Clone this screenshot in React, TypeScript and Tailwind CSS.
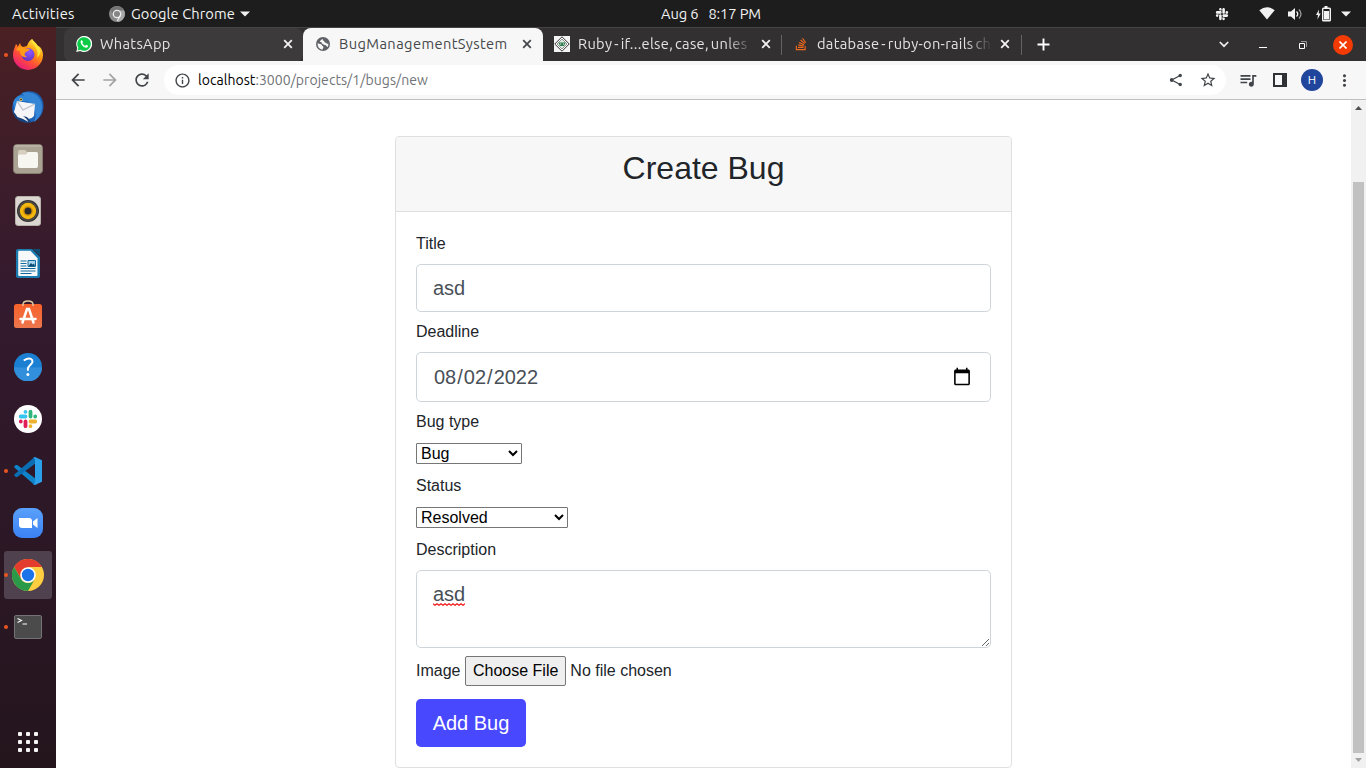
import type { ReactNode } from "react";
import {
  MdArrowBack, MdArrowForward, MdRefresh, MdInfoOutline, MdStarBorder, MdQueueMusic, MdMoreVert,
} from "react-icons/md";
import { FaStackOverflow, FaSlack } from "react-icons/fa";

function TopBar() {
  return (
    <header className="grid h-[27px] shrink-0 grid-cols-[1fr_auto_1fr] items-center bg-[#1d1d1d] text-[14.667px] text-[#f2f2f2]">
      <div className="flex items-center pl-3">
        <span className="w-[63px] whitespace-nowrap tracking-[0.25px]">Activities</span>
        <svg className="ml-[34px]" width="16" height="16" viewBox="0 0 16 16">
          <circle cx="8" cy="8" r="8" fill="#8b8b8b" />
          <path d="M8 4.3h6.9A8 8 0 0 1 8 16l3-5.500z" fill="#a8a8a8" />
          <path d="M8 4.3h6.9A8 8 0 0 0 1.4 3.500L4.800 9.400z" fill="#747474" />
          <circle cx="8" cy="8" r="3.700" fill="#858585" stroke="#eee" strokeWidth="1.300" />
          <path d="M11.300 9.500 8.300 14.800" stroke="#eee" strokeWidth="1.200" />
        </svg>
        <span className="ml-1.5 w-[105px] whitespace-nowrap tracking-[0.08px]">Google Chrome</span>
        <svg className="ml-1" width="10" height="6"><path d="M0 .5h10L5 5.500z" fill="#f2f2f2" /></svg>
      </div>
      <div className="flex gap-2.5 pl-[56px] whitespace-nowrap">
        <span className="tracking-[-0.1px]">Aug 6</span>
        <span className="tracking-[-0.1px]">8:17 PM</span>
      </div>
      <div className="flex items-center justify-end pr-[15px]">
        <FaSlack size={14} />
        <svg className="ml-[30px]" width="16" height="13" viewBox="0 0 16 13">
          <path d="M.3 3.200Q8-2.600 15.700 3.200L8 12.400z" fill="#f2f2f2" />
        </svg>
        <svg className="ml-[13px]" width="15" height="14" viewBox="0 0 15 14">
          <path d="M0 4.500h3L7 1v12L3 9.500H0z" fill="#f2f2f2" />
          <path d="M8.500 4.500q2.500 2.500 0 5" fill="none" stroke="#f2f2f2" strokeWidth="1.300" />
          <path d="M11 2.500q4 4.500 0 9" fill="none" stroke="#a0a0a0" strokeWidth="1.200" />
        </svg>
        <svg className="ml-[13px]" width="15" height="16" viewBox="0 0 15 16">
          <path d="M3 3.500 0 9h2l-.6 4.500L4.700 7.500H2.700z" fill="#f2f2f2" />
          <path d="M8.500 0h3v2h-3z" fill="#f2f2f2" />
          <rect x="6.700" y="2.200" width="7.600" height="12.600" rx=".8" fill="none" stroke="#f2f2f2" strokeWidth="1.400" />
          <path d="M8 5h5v8.500H8z" fill="#f2f2f2" />
        </svg>
        <svg className="ml-2.5" width="10" height="6"><path d="M0 .5h10L5 5.500z" fill="#f2f2f2" /></svg>
      </div>
    </header>
  );
}

function Firefox() {
  return (
    <svg width="32" height="32" viewBox="0 0 32 32">
      <defs>
        <linearGradient id="ffBody" x1=".85" y1=".05" x2=".2" y2="1">
          <stop offset="0" stopColor="#fff44f" /><stop offset=".35" stopColor="#ff980e" />
          <stop offset=".65" stopColor="#ff4a3d" /><stop offset="1" stopColor="#e31587" />
        </linearGradient>
        <radialGradient id="ffGlobe" cx=".6" cy=".3" r=".8">
          <stop offset="0" stopColor="#9059ff" /><stop offset="1" stopColor="#5b2fbd" />
        </radialGradient>
      </defs>
      <path d="M20 0c1 2 4 3.500 5.500 6.500C29 8 31 12 31 16A15 15 0 1 1 1 16C1 11 3 8 4 5c1 1 1.500 1.500 1.600 3L8 4c.5 2 1 3 3 4l4-1c1-3 2-5 5-7z" fill="url(#ffBody)" />
      <circle cx="16" cy="15.500" r="6.500" fill="url(#ffGlobe)" />
      <path d="M4 11c2-4 6-4 8-2l6 1c-1 2-4 2.500-5 4-1 2 0 3 2 4-4 1-7-2-7-6z" fill="#ff9b16" />
      <path d="M20 0c-1 4 2 5 4 9 2 3 2 7 1 10 5-5 4-9 .5-12.500C24 4 21 2 20 0z" fill="#ffe53a" />
    </svg>
  );
}
function Thunderbird() {
  return (
    <svg width="34" height="34" viewBox="0 0 34 34">
      <path d="M11 3C19-1 28 2 31 9c4 9 0 20-10 23-7 2-16-1-19-9C0 17 2 10 7 7z" fill="#1b62b5" />
      <path d="M11 3c10-3 19 3 20 12 1 7-3 14-8 17 3-7 2-12-4-18z" fill="#3585d6" />
      <path d="M2 13c2-7 7-9 12-7l8 6-12-1-6 8z" fill="#2f86d8" />
      <path d="m6 11 18 3-1 12q-3 4-8 2L3 22z" fill="#f6f6f8" />
      <path d="m6 11 6 9 12-6" fill="none" stroke="#b9bec8" strokeWidth="1.200" />
      <path d="M2 22c5 3 8 4 14 5l4 5C12 34 4 30 2 22z" fill="#174078" />
      <path d="m3 22 3.500-1 9 8 2 3q-4-3-11-5z" fill="#f6f6f8" />
      <circle cx="10" cy="9.500" r="1.500" fill="#f4c95d" /><circle cx="10" cy="9.500" r=".8" fill="#111" />
    </svg>
  );
}
function Files() {
  return (
    <svg width="30" height="30" viewBox="0 0 30 30">
      <rect x=".5" y=".5" width="29" height="29" rx="3.500" fill="#aaa394" stroke="#847e70" />
      <rect x="1.500" y="1.500" width="27" height="1" fill="#c8c1b3" />
      <path d="M5 8a2 2 0 0 1 2-2h5l2 2h9a2 2 0 0 1 2 2v4H5z" fill="#d6cfc0" />
      <path d="M5 12q0-1.500 1.500-1.500H13L15 8h8q2 0 2 2v12q0 2-2 2H7q-2 0-2-2z" fill="#f8f6f1" />
    </svg>
  );
}
function Rhythmbox() {
  return (
    <svg width="26" height="30" viewBox="0 0 26 30">
      <rect x=".5" y=".5" width="25" height="29" rx="2.500" fill="#dcd7d1" stroke="#b6b1ab" />
      <circle cx="13" cy="15" r="11" fill="#323232" />
      <circle cx="13" cy="15" r="9.300" fill="none" stroke="#59574f" />
      <circle cx="13" cy="15" r="8.200" fill="#f3b70f" />
      <circle cx="13" cy="15" r="5" fill="#d79605" />
      <circle cx="13" cy="15" r="3.500" fill="#292a2d" />
    </svg>
  );
}
function Writer() {
  return (
    <svg width="24" height="29" viewBox="0 0 24 29">
      <path d="M2 0h14l8 8v19a2 2 0 0 1-2 2H2a2 2 0 0 1-2-2V2a2 2 0 0 1 2-2z" fill="#197bb0" />
      <path d="M17 0h7v7z" fill="#0f4c72" />
      <path d="M3.200 1.800H14.500l7 7.500V26q0 1-1 1H3.200q-1 0-1-1V3q0-1.200 1-1.200z" fill="#f6f8f9" />
      <path d="M4.500 12h6M4.500 14.500h6M4.500 17h6M4.500 19.500h15M4.500 22h15M4.500 24.500h11" stroke="#126a9c" strokeWidth="1.200" />
      <path d="M12 11.500h7.500v6H12z" fill="#a9d4ed" stroke="#126a9c" />
      <path d="m12.500 17 2.500-3 1.500 1.500 1.500-1 1 2.500z" fill="#0f4c72" />
    </svg>
  );
}
function Software() {
  return (
    <svg width="30" height="30" viewBox="0 0 30 30">
      <defs><linearGradient id="bag" x1="0" y1="0" x2="0" y2="1"><stop stopColor="#f7612a" /><stop offset="1" stopColor="#ed764d" /></linearGradient></defs>
      <rect x="1" y="4" width="28" height="24" rx="2.500" fill="url(#bag)" />
      <path d="M10 6V4.500q0-3.500 5-3.500t5 3.500V6" fill="none" stroke="#ddc8a2" strokeWidth="1.500" />
      <path d="M9.500 22.500 14 9h2l4.500 13.500M7.500 19h15" fill="none" stroke="#fff" strokeWidth="2.500" strokeLinecap="round" />
    </svg>
  );
}
function Help() {
  return (
    <svg width="28" height="28" viewBox="0 0 28 28">
      <circle cx="14" cy="14" r="14" fill="#1c80d2" />
      <path d="M0 14.500h28a14 14 0 0 1-28 0z" fill="#318fdb" />
      <path d="M9.700 7.500q6-3.800 8.500-.4c2 4-4.300 4.700-4.300 8.900v1.700" fill="none" stroke="#fff" strokeWidth="1.900" />
      <circle cx="13.900" cy="21.600" r="1.500" fill="#fff" />
    </svg>
  );
}
function Slack() {
  return (
    <svg width="28" height="28" viewBox="0 0 28 28">
      <circle cx="14" cy="14" r="14" fill="#fff" />
      <g strokeWidth="3.800" strokeLinecap="round">
        <path d="M11.500 6.800h.01M6.700 11.500h4.800" stroke="#36c5f0" />
        <path d="M16.500 6.700v4.800M21.200 11.500h.01" stroke="#2eb67d" />
        <path d="M16.500 21.200h.01M16.500 16.500h4.700" stroke="#ecb22e" />
        <path d="M6.800 16.500h.01M11.500 16.500v4.700" stroke="#e01e5a" />
      </g>
    </svg>
  );
}
function Code() {
  return (
    <svg width="28" height="28" viewBox="0 0 28 28">
      <path d="m.3 9.300 1.500-1.400h1.500L21 21.300v6.200h-1L.3 10.500z" fill="#0f84cb" />
      <path d="m.3 18.700 1.500 1.400h1.500L21 6.700V.5h-1L.3 17.500z" fill="#0b6db3" />
      <path d="M21 0 28 3.300v21.400L21 28l-1.800-.7L21 26V2L19.200.7z" fill="#2b9fe9" />
    </svg>
  );
}
function Zoom() {
  return (
    <svg width="30" height="30" viewBox="0 0 30 30">
      <defs><linearGradient id="zoomBg" x1="0" y1="0" x2="0" y2="1"><stop stopColor="#5aa0fb" /><stop offset="1" stopColor="#3b82f3" /></linearGradient></defs>
      <rect width="30" height="30" rx="9" fill="url(#zoomBg)" />
      <path d="M6 10h10q3 0 3 3v7H9q-3 0-3-3z" fill="#fff" /><path d="m20 13.500 4.500-3.500v10L20 16.500z" fill="#fff" />
    </svg>
  );
}
function Chrome() {
  return (
    <svg width="32" height="32" viewBox="0 0 32 32">
      <circle cx="16" cy="16" r="16" fill="#ffcd40" />
      <path d="M16 8h13.860A16 16 0 0 0 2.140 8l6.930 12z" fill="#e33b2e" />
      <path d="M2.140 8 9.070 20A8 8 0 0 0 22.930 20L16 32A16 16 0 0 1 2.140 8z" fill="#2b9a48" />
      <circle cx="16" cy="16" r="7.800" fill="#fff" /><circle cx="16" cy="16" r="6.200" fill="#1a73e8" />
    </svg>
  );
}
function Terminal() {
  return (
    <svg width="28" height="24" viewBox="0 0 28 24">
      <rect x=".5" y=".5" width="27" height="23" rx="1.500" fill="#4b4b4b" stroke="#737373" />
      <path d="m3.500 3.500 4 2-4 2M8.500 9h4.500" fill="none" stroke="#fff" strokeWidth="1.100" />
    </svg>
  );
}

const dockApps: { icon: ReactNode; running?: boolean; active?: boolean }[] = [
  { icon: <Firefox />, running: true }, { icon: <Thunderbird /> }, { icon: <Files /> },
  { icon: <Rhythmbox /> }, { icon: <Writer /> }, { icon: <Software /> }, { icon: <Help /> },
  { icon: <Slack /> }, { icon: <Code />, running: true }, { icon: <Zoom /> },
  { icon: <Chrome />, running: true, active: true }, { icon: <Terminal />, running: true },
];

function Dock() {
  return (
    <nav className="flex w-14 shrink-0 flex-col bg-linear-to-b from-[#4a2023] via-[#341a2e] via-35% to-[#24151d] pt-0.5">
      {dockApps.map((app, i) => (
        <div key={i} className="relative flex h-[52px] shrink-0 items-center justify-center">
          <div className={app.active ? "flex size-12 items-center justify-center rounded-[3px] bg-[#50414f]" : "flex size-12 items-center justify-center"}>{app.icon}</div>
          {app.running && <i className="absolute left-1 top-6 size-1 rounded-full bg-[#e95420]" />}
        </div>
      ))}
      <div className="mx-auto mt-auto mb-4 grid grid-cols-3 gap-1">
        {Array.from({ length: 9 }, (_, i) => <i key={i} className="size-1 rounded-[1px] bg-[#f4f4f4]" />)}
      </div>
    </nav>
  );
}

function Close({ dark }: { dark?: boolean }) {
  return (
    <svg width="10" height="10" viewBox="0 0 10 10" className="shrink-0">
      <path d="m1.200 1.200 7.600 7.600m0-7.600L1.200 8.800" stroke={dark ? "#45494d" : "#f3f3f3"} strokeWidth="1.800" />
    </svg>
  );
}
function Tab({ icon, title, active, className = "" }: { icon: ReactNode; title: string; active?: boolean; className?: string }) {
  return (
    <div className={"flex h-[34px] shrink-0 items-center pb-0.5 pl-3 " + (active ? "-mr-px w-[240px] rounded-t-lg bg-[#f7f7f7] text-[#45474a] " : "w-[239px] text-[#e3e3e3] ") + className}>
      <span className="flex size-4 items-center justify-center">{icon}</span>
      <span className={"ml-2 w-[175px] overflow-hidden whitespace-nowrap text-[14.667px] [word-spacing:-1.700px] " + (active ? "tracking-[0.4px]" : "tracking-[0.3px] mask-r-from-85%")}>{title}</span>
      <span className="ml-2"><Close dark={active} /></span>
    </div>
  );
}
function WhatsApp() {
  return (
    <svg width="16" height="16" viewBox="0 0 16 16">
      <path d="M.2 16 1.300 12A8 8 0 1 1 4.200 14.900z" fill="#fff" />
      <path d="M1.600 14.600 2.400 11.800A6.800 6.800 0 1 1 4.500 13.800z" fill="#0ccb46" />
      <path d="M5.800 4.100q-1.600.7-1.200 2.300c.8 2.900 3 4.900 5.600 5.300q1.700-.1 2-1.900l-2.100-1-1 1.100Q7.300 9.100 6.300 7.100l.8-1z" fill="#fff" />
    </svg>
  );
}
function Globe() {
  return (
    <svg width="14" height="14" viewBox="0 0 14 14">
      <circle cx="7" cy="7" r="7" fill="#5f6368" />
      <path d="M1.600 6.200c2 .8 3.700.3 4.200 1.700.4 1.200 1.500.8 1.600 2 0 1-.8 1.400-.7 2.600-3 0-5.400-2.500-5.100-6.300zM7.500 1.700c-1.400.8-.8 1.600.3 2 1 .6.300 1.600 1.300 1.800 1.200.3 1.500 1.300 3.200 1.300.2 1.600-.3 2.700-.8 3.300-.8-.8-1.300-1.800-2.700-2-1.400-.2-1.600-1.200-3-1.600.3-1-.8-1.500-2-1.400.2-1.500 1.800-2.900 3.700-3.400z" fill="#f7f7f7" />
    </svg>
  );
}
function Diamond() {
  return (
    <svg width="16" height="16" viewBox="0 0 16 16">
      <path d="M0 0h16v16H0z" fill="#f4f4f4" />
      <path d="m8 .8 7.200 7.200L8 15.200.8 8z" fill="#fff" stroke="#333" strokeWidth="1" />
      <path d="m8 3 5 5-5 5-5-5z" fill="#dce9e0" stroke="#555" strokeWidth=".6" />
      <path d="M4.500 6.500h7L10 10H6z" fill="#2f7a50" /><path d="M6.200 8h1M9 8h1" stroke="#fff" />
    </svg>
  );
}

function TabStrip() {
  return (
    <div className="flex h-[34px] items-center border-t border-[#474445] bg-[#333031] pl-2">
      <Tab className="rounded-lg bg-[#3c3a3b]" title="WhatsApp" icon={<WhatsApp />} />
      <Tab active title="BugManagementSystem" icon={<Globe />} />
      <Tab title="Ruby - if...else, case, unles" icon={<Diamond />} />
      <i className="-mr-px h-5 w-px bg-[#656263]" />
      <Tab title="database - ruby-on-rails ch" icon={<FaStackOverflow size={14} color="#f26b1d" />} />
      <i className="ml-px h-5 w-px bg-[#656263]" />
      <svg className="ml-[15px]" width="13" height="13" viewBox="0 0 13 13"><path d="M6.500 .5v12m-6-6h12" stroke="#fff" strokeWidth="1.900" /></svg>
      <div className="ml-auto flex items-center pr-[13px]">
        <svg width="10" height="7"><path d="m.8 1 4.200 4.200L9.200 1" fill="none" stroke="#eee" strokeWidth="1.700" /></svg>
        <svg className="ml-[30px]" width="8" height="8"><path d="M0 6h8v1H0z" fill="#fff" /></svg>
        <svg className="ml-8" width="8" height="8" viewBox="0 0 8 8"><path d="M.5 2.500h5v5h-5z" fill="none" stroke="#fff" /><path d="M2 .5h5.500V6" fill="none" stroke="#999" /></svg>
        <span className="ml-[26px] flex size-5 items-center justify-center rounded-full bg-[#f43b04]">
          <svg width="8" height="8"><path d="m.5.5 7 7m0-7-7 7" stroke="#fff" strokeWidth="1.600" /></svg>
        </span>
      </div>
    </div>
  );
}

function Toolbar() {
  return (
    <div className="flex h-[39px] items-center border-b border-[#bfbfbf] bg-[#f7f7f7] pl-3 text-[#414549]">
      <MdArrowBack size={20} />
      <MdArrowForward className="ml-3" size={20} color="#a3a3a3" />
      <MdRefresh className="ml-3" size={20} />
      <div className="ml-3 flex h-[30px] w-[1062px] items-center rounded-full bg-white pr-[9px] pl-2.5">
        <MdInfoOutline size={17} />
        <div className="ml-[7px] text-[14px] tracking-[0.05px] text-[#707377]"><span className="text-black">localhost</span>:3000/projects/1/bugs/new</div>
        <svg className="ml-auto" width="14" height="14" viewBox="0 0 14 14">
          <path d="M11.200 2.500 2.700 7l8.500 4.500" fill="none" stroke="#414549" strokeWidth="1.300" />
          <circle cx="11.200" cy="2.500" r="1.700" fill="#414549" /><circle cx="2.700" cy="7" r="1.900" fill="#414549" /><circle cx="11.200" cy="11.500" r="1.700" fill="#414549" />
        </svg>
        <MdStarBorder className="ml-4" size={18} />
      </div>
      <MdQueueMusic className="ml-3" size={20} />
      <svg className="ml-[15px]" width="14" height="14"><path d="M1 1h12v12H1z" fill="none" stroke="#303134" strokeWidth="2" /><path d="M9 1h5v12H9z" fill="#303134" /></svg>
      <span className="ml-3.5 flex size-[22px] items-center justify-center rounded-full bg-[#1f459d] text-[12px] text-white">H</span>
      <MdMoreVert className="ml-3" size={19} />
    </div>
  );
}

const field = "w-full rounded-[4.800px] border border-[#ced4da] bg-white px-4 py-2 text-[20px] leading-[30px] text-[#495057]";

function BugForm() {
  return (
    <form className="flex h-[632px] w-[617px] flex-col overflow-hidden rounded border border-[#dfdfdf] bg-white font-['Liberation_Sans',sans-serif] text-[16px] leading-6 text-[#212529]">
      <div className="h-[75px] shrink-0 border-b border-[#dfdfdf] bg-[#f7f7f7] pt-3 text-center">
        <h2 className="text-[32px] leading-[38.400px]">Create Bug</h2>
      </div>
      <div className="flex flex-col items-start p-5">
        <label className="mb-2">Title</label>
        <input className={field + " h-12"} defaultValue="asd" />
        <label className="my-2">Deadline</label>
        <input className={field + " h-[50px]"} type="date" defaultValue="2022-08-02" />
        <label className="mt-2 mb-[9px]">Bug type</label>
        <select className="h-[21px] w-[106px] rounded-[1px] border border-[#767676] bg-white text-[16px] leading-normal text-black"><option>Bug</option></select>
        <label className="mt-2.5 mb-[9px]">Status</label>
        <select className="h-[21px] w-[152px] rounded-[1px] border border-[#767676] bg-white text-[16px] leading-normal text-black"><option>Resolved</option></select>
        <label className="mt-2.5 mb-2">Description</label>
        <div className="relative flex w-full">
          <textarea spellCheck={false} className={field + " h-[78px] resize-y"} defaultValue="asd" />
          <svg className="absolute top-[32.500px] left-[17px]" width="32" height="3" viewBox="0 0 32 3">
            <path d="M0 .8 2 2.300l2-1.500 2 1.500 2-1.500 2 1.500 2-1.500 2 1.500 2-1.500 2 1.500 2-1.500 2 1.500 2-1.500 2 1.500 2-1.500 2 1.500 2-1.500" fill="none" stroke="#f01818" strokeWidth="1.200" />
          </svg>
        </div>
        <div className="mt-2 flex h-[30px] items-center">
          <label>Image</label>
          <input type="file" className="ml-[4.500px] h-[30px] w-[260px] text-[16px] leading-6 file:mr-1 file:h-[30px] file:rounded-[2px] file:border file:border-[#767676] file:bg-[#efefef] file:px-[7px] file:text-black" />
        </div>
        <button type="button" className="mt-[13px] h-12 w-[110px] rounded-[4.800px] bg-[#4848ff] text-[20px] leading-[30px] text-white">Add Bug</button>
      </div>
    </form>
  );
}

export default function App() {
  return (
    <div className="flex h-screen w-full flex-col overflow-hidden font-['Ubuntu','Noto_Sans',sans-serif]">
      <TopBar />
      <div className="flex min-h-0 flex-1">
        <Dock />
        <section className="flex min-w-0 flex-1 flex-col">
          <TabStrip />
          <Toolbar />
          <div className="flex min-h-0 flex-1 bg-white">
            <main className="flex flex-1 justify-center pt-9"><BugForm /></main>
            <div className="flex w-[15px] flex-col items-center bg-[#f1f1f1]">
              <svg className="mt-1.5" width="7" height="4"><path d="M0 4h7L3.500 0z" fill="#505050" /></svg>
              <div className="mt-[72px] h-[571px] w-[11px] bg-[#c1c1c1]" />
              <svg className="mt-[5px]" width="7" height="4"><path d="M0 0h7L3.500 4z" fill="#a3a3a3" /></svg>
            </div>
          </div>
        </section>
      </div>
    </div>
  );
}
